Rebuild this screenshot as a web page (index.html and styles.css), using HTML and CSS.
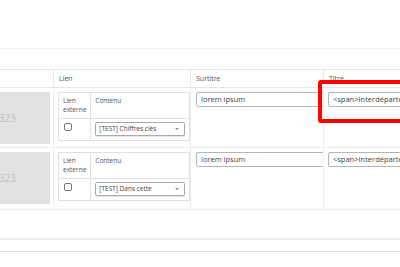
FILE: index.html
```html
<!DOCTYPE html>
<html lang="fr">
<head>
    <meta charset="UTF-8">
    <title>Repeater</title>
    <link rel="stylesheet" href="styles.css">
</head>
<body>
    <div class="topbar"></div>
    <div class="spacer"></div>

    <div class="repeater-wrap">
        <table class="repeater">
            <colgroup>
                <col class="col-img">
                <col class="col-link">
                <col class="col-sub">
                <col class="col-title">
            </colgroup>
            <thead>
                <tr>
                    <th></th>
                    <th>Lien</th>
                    <th>Surtitre</th>
                    <th>Titre</th>
                </tr>
            </thead>
            <tbody>
                <tr>
                    <td><div class="thumb">400x323</div></td>
                    <td>
                        <table class="inner">
                            <tr class="inner-head">
                                <td class="c-ext">Lien<br>externe</td>
                                <td>Contenu</td>
                            </tr>
                            <tr>
                                <td class="c-ext"><input type="checkbox" class="check"></td>
                                <td><div class="select">[TEST] Chiffres clés<span class="caret"></span></div></td>
                            </tr>
                        </table>
                    </td>
                    <td><div class="field">lorem ipsum</div></td>
                    <td><div class="field wide">&lt;span&gt;Interdépartementale&lt;/span&gt;</div></td>
                </tr>
                <tr>
                    <td><div class="thumb">400x323</div></td>
                    <td>
                        <table class="inner">
                            <tr class="inner-head">
                                <td class="c-ext">Lien<br>externe</td>
                                <td>Contenu</td>
                            </tr>
                            <tr>
                                <td class="c-ext"><input type="checkbox" class="check"></td>
                                <td><div class="select">[TEST] Dans cette<span class="caret"></span></div></td>
                            </tr>
                        </table>
                    </td>
                    <td><div class="field">lorem ipsum</div></td>
                    <td><div class="field wide">&lt;span&gt;Interdépartementale&lt;/span&gt;</div></td>
                </tr>
            </tbody>
        </table>
    </div>

    <div class="gap"></div>
    <div class="rule-thick"></div>
    <div class="gap-small"></div>
    <div class="rule"></div>

    <div class="highlight"></div>
</body>
</html>
```

FILE: styles.css
```css
body {
    margin: 0;
    width: 400px;
    height: 267px;
    overflow: hidden;
    background: #fff;
    font-family: 'Open Sans', 'Noto Sans', sans-serif;
    color: #555;
    position: relative;
}

.topbar {
    height: 48px;
    border-bottom: 1px solid #f1f1f1;
}

.spacer {
    height: 20px;
}

.repeater-wrap {
    margin-left: -60px;
}

.repeater {
    border-collapse: collapse;
    table-layout: fixed;
    width: 583px;
}

.col-img { width: 113px; }
.col-link { width: 137px; }
.col-sub { width: 133px; }
.col-title { width: 200px; }

.repeater th {
    height: 17px;
    padding: 0 5px;
    font-size: 7px;
    font-weight: normal;
    text-align: left;
    color: #555;
    border: 1px solid #e6e6e6;
}

.repeater > tbody > tr > td {
    vertical-align: top;
    padding: 4px 4px 3px 4px;
    border: 1px solid #ececec;
}

.repeater > tbody > tr:last-child > td {
    padding-bottom: 5px;
}

.repeater > tbody > tr > td:first-child {
    padding-left: 9px;
}

.repeater > tbody > tr > td:nth-child(3) {
    padding-left: 5px;
}

.thumb {
    width: 100px;
    height: 52px;
    background: #e2e2e2;
    color: #bdbdbd;
    font-size: 10px;
    display: flex;
    align-items: center;
    justify-content: flex-end;
    padding-right: 34px;
    box-sizing: border-box;
}

.inner {
    border-collapse: collapse;
    width: 131px;
    border: 1px solid #e0e0e0;
}

.inner td {
    font-size: 6.5px;
    line-height: 9px;
    vertical-align: top;
    border: 1px solid #e0e0e0;
    padding: 3px 4px;
}

.inner .c-ext {
    width: 21px;
}

.inner-head td {
    height: 19px;
}

.inner tr:last-child td {
    padding: 3px 4px 4px 4px;
}

.check {
    appearance: none;
    -webkit-appearance: none;
    display: block;
    width: 8px;
    height: 8px;
    margin: 1px 0 0 1px;
    border: 1px solid #777;
    border-radius: 2px;
    background: #fff;
}

.select {
    position: relative;
    height: 12px;
    width: 85px;
    border: 1px solid #aaa;
    border-radius: 2px;
    box-shadow: 0 1px 1px rgba(0,0,0,0.12);
    font-size: 6.5px;
    line-height: 12px;
    padding-left: 3px;
    color: #444;
    white-space: nowrap;
    overflow: hidden;
}

.caret {
    position: absolute;
    right: 5px;
    top: 5px;
    border-left: 2px solid transparent;
    border-right: 2px solid transparent;
    border-top: 2px solid #888;
}

.field {
    height: 13px;
    width: 122px;
    border: 1px solid #b5b5b5;
    border-radius: 2px;
    font-size: 7.5px;
    line-height: 13px;
    padding-left: 4px;
    color: #444;
    white-space: nowrap;
    overflow: hidden;
}

.field.wide {
    width: 180px;
}

.gap {
    height: 28px;
}

.rule-thick {
    height: 2px;
    background: #ececec;
}

.gap-small {
    height: 11px;
}

.rule {
    height: 1px;
    background: #e0e0e0;
}

.highlight {
    position: absolute;
    left: 318px;
    top: 80px;
    width: 100px;
    height: 35px;
    border: 4px solid #ff0000;
    border-radius: 3px;
}
```
